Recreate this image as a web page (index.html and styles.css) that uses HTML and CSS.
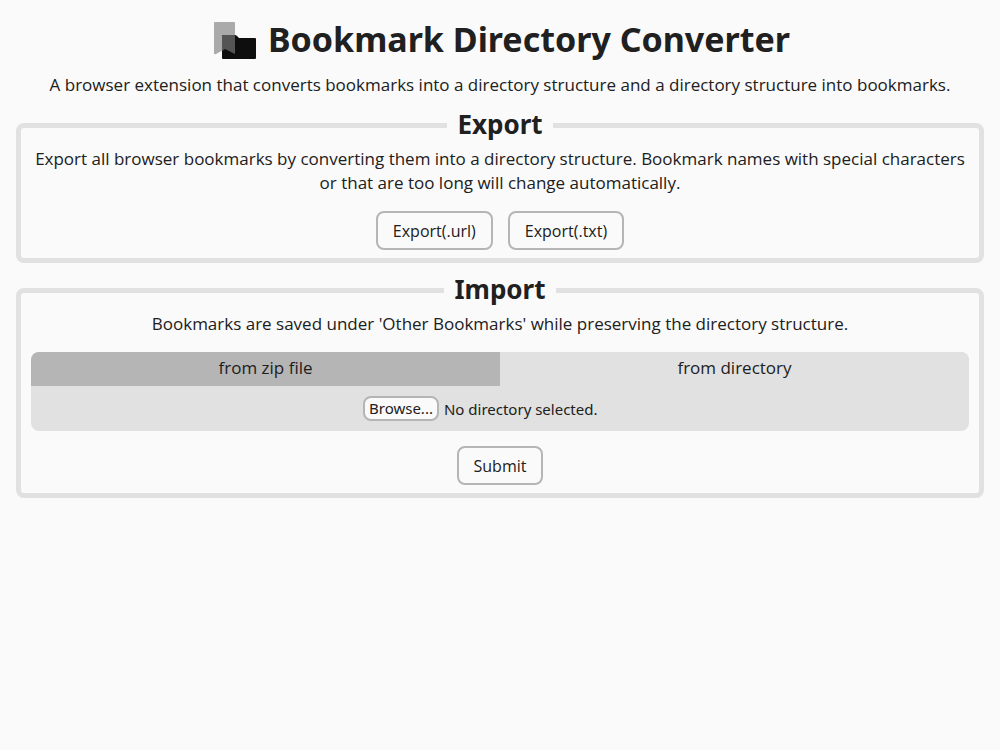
FILE: index.html
```html
<!DOCTYPE html>
<html lang="en">
<head>
<meta charset="utf-8">
<title>Bookmark Directory Converter</title>
<link rel="stylesheet" href="styles.css">
</head>
<body>
<header class="header">
  <h1 class="title">
    <svg class="logo" viewBox="0 -2 42 40" aria-hidden="true">
      <path fill="#aaa" d="M1 0h19q1 0 1 1v31l-10-5-9 5q-2 1-2-1V1q0-1 1-1z"/>
      <path fill="#0e0e0e" d="M9 13h12q1 0 2 1l2 2h16q1 0 1 1v19q0 1-1 1H9q-1 0-1-1V14q0-1 1-1z"/>
      <path fill="#555" d="M9 13h12v19l-10-5-3 2V14q0-1 1-1z"/>
    </svg>
    <span>Bookmark Directory Converter</span>
  </h1>
  <p class="text">A browser extension that converts bookmarks into a directory structure and a directory structure into bookmarks.</p>
</header>
<main class="main">
  <fieldset class="panel">
    <legend class="legend">Export</legend>
    <p class="text">Export all browser bookmarks by converting them into a directory structure. Bookmark names with special characters or that are too long will change automatically.</p>
    <div class="actions">
      <button class="button" type="button">Export(.url)</button>
      <button class="button" type="button">Export(.txt)</button>
    </div>
  </fieldset>
  <form>
    <fieldset class="panel">
      <legend class="legend">Import</legend>
      <p class="text">Bookmarks are saved under 'Other Bookmarks' while preserving the directory structure.</p>
      <div class="source">
        <div class="tabs" role="tablist">
          <button class="tab" type="button" role="tab" aria-selected="false">from zip file</button>
          <button class="tab tab-active" type="button" role="tab" aria-selected="true">from directory</button>
        </div>
        <div class="picker" role="tabpanel">
          <div class="file">
            <button class="browse" type="button">Browse...</button>
            <output class="file-name">No directory selected.</output>
            <input class="file-input" type="file" webkitdirectory hidden aria-label="Directory">
          </div>
        </div>
      </div>
      <div class="actions">
        <button class="button" type="submit">Submit</button>
      </div>
    </fieldset>
  </form>
</main>
<script src="script.js"></script>
</body>
</html>
```
FILE: styles.css
```css
* {
  box-sizing: border-box;
}

body {
  margin: 0;
  padding: 16px;
  background: #fafafa;
  color: #202020;
  font: 17px/24px "Open Sans", "Noto Sans", sans-serif;
  text-align: center;
}

.title {
  display: flex;
  align-items: center;
  justify-content: center;
  gap: 12px;
  margin: 0 0 10px;
  padding-left: 4px;
  font-family: "Noto Sans", sans-serif;
  font-size: 34px;
  line-height: 47px;
}

.logo {
  width: 42px;
  height: 40px;
}

.text {
  margin: 0;
  padding-bottom: 1px;
}

.main {
  display: flex;
  flex-direction: column;
  gap: 9px;
  margin-top: 9px;
}

.panel {
  min-width: 0;
  margin: 0;
  padding: 4px 10px 8px;
  border: 5px solid #e1e1e1;
  border-radius: 8px;
}

.legend {
  margin: 0 auto;
  padding: 0 10px 2px;
  font-family: "Noto Sans", sans-serif;
  font-size: 26px;
  font-weight: bold;
  line-height: 34px;
}

.actions {
  display: flex;
  justify-content: center;
  gap: 15px;
  margin-top: 15px;
}

.button,
.browse,
.tab {
  font: inherit;
  color: inherit;
  cursor: pointer;
}

.button,
.browse {
  border: 2px solid #b5b5b5;
  border-radius: 8px;
  background: #fafafa;
}

.button {
  height: 39px;
  padding: 0 15px;
  font-size: 16px;
}

.source {
  overflow: hidden;
  margin-top: 15px;
  border-radius: 8px;
  background: #e1e1e1;
}

.tabs {
  display: grid;
  grid-template-columns: 1fr 1fr;
}

.tab {
  height: 34px;
  padding: 0 0 2px;
  border: 0;
  background: #b5b5b5;
}

.tab-active {
  background: #e1e1e1;
}

.picker {
  display: flex;
  justify-content: center;
  padding: 10px;
}

.file {
  display: flex;
  align-items: center;
  gap: 5px;
  width: 274px;
  font-family: "Noto Sans", sans-serif;
  font-size: 15px;
}

.browse {
  height: 25px;
  padding: 0 4px;
  line-height: 21px;
}
```
FILE: script.js
```js
const input = document.querySelector(".file-input");
document.querySelector(".browse").addEventListener("click", () => input.click());
```
